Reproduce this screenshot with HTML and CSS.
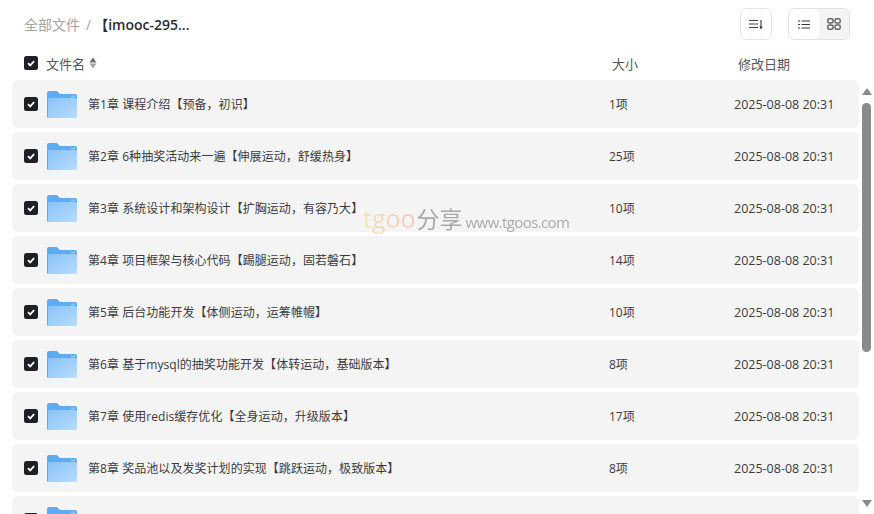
FILE: index.html
```html
<!DOCTYPE html>
<html lang="en">
<head>
  <meta charset="UTF-8" />
  <title>全部文件</title>
  <link rel="stylesheet" href="styles.css">
</head>
<body>
  <svg class="defs" width="0" height="0">
    <defs>
      <linearGradient id="folderFront" x1="0" y1="0" x2="1" y2="1">
        <stop offset="0" stop-color="#86c2f9"/>
        <stop offset="1" stop-color="#b9dcfd"/>
      </linearGradient>
      <symbol id="folder" viewBox="0 0.500 30 27">
        <path d="M0 2.500a2 2 0 0 1 2-2h8l3 3h15a2 2 0 0 1 2 2v5H0z" fill="#5fabf1"/>
        <rect x="24" y="5" width="4" height="2" fill="#8cc4f6"/>
        <path d="M0 7.500h28.500a1.500 1.500 0 0 1 1.500 1.500v17.500a1 1 0 0 1-1 1H1a1 1 0 0 1-1-1z" fill="url(#folderFront)"/>
        <path d="M0.500 8v19" stroke="#5fabf1" stroke-width="1"/>
      </symbol>
      <symbol id="check" viewBox="0 0 14 14">
        <rect width="14" height="14" rx="2.500" fill="#1f2026"/>
        <path d="M4 7.200l2.200 2.200L10.200 5" fill="none" stroke="#fff" stroke-width="1.800"/>
      </symbol>
    </defs>
  </svg>

  <div class="page">
    <div class="toolbar">
      <div class="crumbs">
        <span class="crumb-root">全部文件</span>
        <span class="crumb-sep">/</span>
        <span class="crumb-current">【imooc-295...</span>
      </div>
      <div class="tools">
        <button class="sort-btn">
          <svg width="16" height="14" viewBox="0 0 16 14" fill="none" stroke="#44454b" stroke-width="1.200">
            <path d="M1 3.500h9M1 7h9M1 10.500h9M13 3v8"/>
            <path d="M11.300 9.500l1.700 3 1.700-3z" fill="#33343a" stroke="none"/>
          </svg>
        </button>
        <div class="view-switch">
          <span class="view-opt active">
            <svg width="12" height="9" viewBox="0 0 12 9" fill="none" stroke="#33343a" stroke-width="1.100">
              <path d="M0 1h2M3.500 1H12M0 4.500h2M3.500 4.500H12M0 8h2M3.500 8H12"/>
            </svg>
          </span>
          <span class="view-opt">
            <svg width="14" height="12" viewBox="0 0 14 12" fill="none" stroke="#66676d" stroke-width="1.500">
              <rect x="0.800" y="0.800" width="5.200" height="4.200" rx="1.500"/>
              <rect x="8" y="0.800" width="5.200" height="4.200" rx="1.500"/>
              <rect x="0.800" y="7" width="5.200" height="4.200" rx="1.500"/>
              <rect x="8" y="7" width="5.200" height="4.200" rx="1.500"/>
            </svg>
          </span>
        </div>
      </div>
    </div>

    <div class="table-head">
      <div class="col-name">
        <svg class="check"><use href="#check"/></svg>
        <span>文件名</span>
        <svg class="sort-caret" width="8" height="12" viewBox="0 0 8 12">
          <path d="M4 0.500l3.500 5h-7z" fill="#6f7075"/>
          <path d="M4 11.500l3.500-5h-7z" fill="#a5a5a8"/>
        </svg>
      </div>
      <div class="col-size">大小</div>
      <div class="col-date">修改日期</div>
    </div>

    <div class="body">
      <div class="rows">
        <div class="row">
          <svg class="check"><use href="#check"/></svg>
          <svg class="folder"><use href="#folder"/></svg>
          <div class="name">第1章 课程介绍【预备，初识】</div>
          <div class="size">1项</div>
          <div class="date">2025-08-08 20:31</div>
        </div>
        <div class="row">
          <svg class="check"><use href="#check"/></svg>
          <svg class="folder"><use href="#folder"/></svg>
          <div class="name">第2章 6种抽奖活动来一遍【伸展运动，舒缓热身】</div>
          <div class="size">25项</div>
          <div class="date">2025-08-08 20:31</div>
        </div>
        <div class="row">
          <svg class="check"><use href="#check"/></svg>
          <svg class="folder"><use href="#folder"/></svg>
          <div class="name">第3章 系统设计和架构设计【扩胸运动，有容乃大】</div>
          <div class="size">10项</div>
          <div class="date">2025-08-08 20:31</div>
        </div>
        <div class="row">
          <svg class="check"><use href="#check"/></svg>
          <svg class="folder"><use href="#folder"/></svg>
          <div class="name">第4章 项目框架与核心代码【踢腿运动，固若磐石】</div>
          <div class="size">14项</div>
          <div class="date">2025-08-08 20:31</div>
        </div>
        <div class="row">
          <svg class="check"><use href="#check"/></svg>
          <svg class="folder"><use href="#folder"/></svg>
          <div class="name">第5章 后台功能开发【体侧运动，运筹帷幄】</div>
          <div class="size">10项</div>
          <div class="date">2025-08-08 20:31</div>
        </div>
        <div class="row">
          <svg class="check"><use href="#check"/></svg>
          <svg class="folder"><use href="#folder"/></svg>
          <div class="name">第6章 基于mysql的抽奖功能开发【体转运动，基础版本】</div>
          <div class="size">8项</div>
          <div class="date">2025-08-08 20:31</div>
        </div>
        <div class="row">
          <svg class="check"><use href="#check"/></svg>
          <svg class="folder"><use href="#folder"/></svg>
          <div class="name">第7章 使用redis缓存优化【全身运动，升级版本】</div>
          <div class="size">17项</div>
          <div class="date">2025-08-08 20:31</div>
        </div>
        <div class="row">
          <svg class="check"><use href="#check"/></svg>
          <svg class="folder"><use href="#folder"/></svg>
          <div class="name">第8章 奖品池以及发奖计划的实现【跳跃运动，极致版本】</div>
          <div class="size">8项</div>
          <div class="date">2025-08-08 20:31</div>
        </div>
        <div class="row">
          <svg class="check"><use href="#check"/></svg>
          <svg class="folder"><use href="#folder"/></svg>
        </div>
      </div>
      <div class="scrollbar">
        <span class="arrow-up"></span>
        <span class="thumb"></span>
        <span class="arrow-down"></span>
      </div>
    </div>

    <div class="watermark">
      <span class="wm-brand">tgoo</span><span class="wm-cn">分享</span><span class="wm-url">www.tgoos.com</span>
    </div>
  </div>
</body>
</html>
```

FILE: styles.css
```css
* {
  box-sizing: border-box;
}
html, body {
  margin: 0;
  height: 100%;
  overflow: hidden;
}
body {
  background-color: #fff;
  color: #3a3b41;
  font-family: 'Open Sans', 'Noto Sans CJK SC', sans-serif;
  font-size: 12px;
}
.defs {
  position: absolute;
}
.page {
  position: relative;
  height: 514px;
  display: flex;
  flex-direction: column;
}
.toolbar {
  height: 48px;
  padding: 8px 24px 0 24px;
  display: flex;
  justify-content: space-between;
  align-items: flex-start;
}
.crumbs {
  height: 32px;
  display: flex;
  align-items: center;
  font-size: 14px;
}
.crumb-root {
  color: #a3a3a6;
}
.crumb-sep {
  color: #a3a3a6;
  margin: 0 3px 0 6px;
}
.crumb-current {
  color: #2b2c32;
  font-weight: 600;
}
.tools {
  display: flex;
  gap: 16px;
}
.sort-btn {
  width: 32px;
  height: 32px;
  padding: 0;
  border: 1px solid #e6e6e8;
  border-radius: 7px;
  background-color: #fff;
  display: flex;
  align-items: center;
  justify-content: center;
}
.view-switch {
  width: 62px;
  height: 32px;
  border: 1px solid #e2e2e4;
  border-radius: 7px;
  background-color: #f4f4f5;
  display: flex;
}
.view-opt {
  flex: 1;
  display: flex;
  align-items: center;
  justify-content: center;
  border-radius: 6px;
}
.view-opt.active {
  background-color: #fff;
}
.table-head {
  height: 30px;
  margin-bottom: 2px;
  display: flex;
  align-items: center;
  padding-left: 24px;
  font-size: 13px;
  color: #55565c;
}
.col-name {
  width: 588px;
  display: flex;
  align-items: center;
}
.col-name span {
  margin-left: 8px;
}
.sort-caret {
  margin-left: 4px;
}
.col-size {
  width: 126px;
}
.check {
  width: 14px;
  height: 14px;
  flex: none;
}
.body {
  flex: 1;
  display: flex;
  overflow: hidden;
}
.rows {
  width: 847px;
  margin-left: 12px;
  display: flex;
  flex-direction: column;
  gap: 4px;
}
.row {
  height: 48px;
  flex: none;
  padding-left: 12px;
  display: flex;
  align-items: center;
  background-color: #f4f4f5;
  border-radius: 6px;
}
.folder {
  width: 30px;
  height: 27px;
  flex: none;
  margin: 1px 11px 0 9px;
}
.name {
  width: 521px;
  letter-spacing: 0.05px;
}
.size {
  width: 125px;
}
.date {
  font-size: 12.5px;
}
.scrollbar {
  width: 15px;
  position: relative;
}
.arrow-up, .arrow-down {
  position: absolute;
  left: 3px;
  width: 0;
  height: 0;
  border-left: 5px solid transparent;
  border-right: 5px solid transparent;
}
.arrow-up {
  top: 8px;
  border-bottom: 7px solid #8a8a8a;
}
.arrow-down {
  top: 420px;
  border-top: 7px solid #8a8a8a;
}
.thumb {
  position: absolute;
  left: 3px;
  top: 23px;
  width: 9px;
  height: 249px;
  background-color: #8a8a8a;
  border-radius: 5px;
}
.watermark {
  position: absolute;
  left: 363px;
  top: 201px;
  display: flex;
  align-items: baseline;
  white-space: nowrap;
  opacity: 0.6;
}
.wm-brand {
  font-size: 25px;
  background: linear-gradient(90deg, #f5d88a, #f7a79a);
  -webkit-background-clip: text;
  color: transparent;
}
.wm-cn {
  font-size: 23px;
  color: #777;
  margin-left: 1px;
}
.wm-url {
  font-size: 15px;
  letter-spacing: -0.6px;
  color: #777;
  margin-left: 3px;
}
```
